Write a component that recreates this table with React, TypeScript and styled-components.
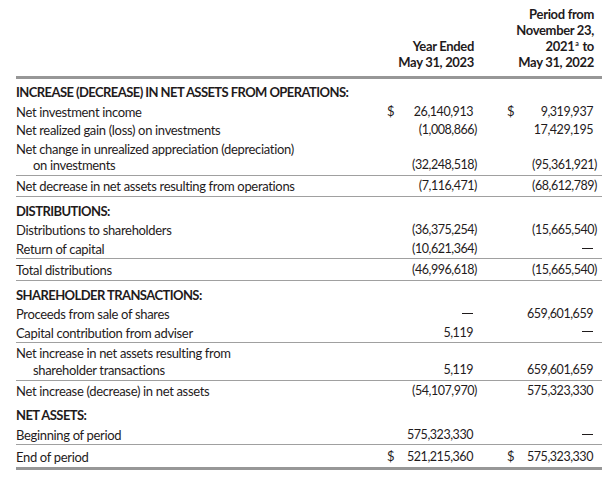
import React from 'react';
import styled, { createGlobalStyle, css } from 'styled-components';

const GlobalStyle = createGlobalStyle`
  html, body {
    margin: 0;
    padding: 0;
    background: #ffffff;
  }
  body {
    font-family: Lato, "Liberation Sans", sans-serif;
    color: #1f1b1c;
  }
`;

const Page = styled.div`
  width: 615px;
  box-sizing: border-box;
  padding: 6px 13px 0 16px;
  font-size: 13px;
  letter-spacing: -0.33px;
`;

const Head = styled.div`
  display: grid;
  grid-template-columns: 1fr 90px 90px;
  column-gap: 30px;
  align-items: end;
  padding: 0 5px 6px 0;
  border-bottom: 3px solid #979797;
  font-weight: 700;
  line-height: 16px;
`;

const HeadCell = styled.div`
  text-align: right;
  white-space: nowrap;
  padding-right: 3px;
`;

const Sup = styled.sup`
  font-size: 7px;
  line-height: 0;
  vertical-align: 5px;
  margin: 0 1px;
`;

const Section = styled.div<{ $first?: boolean }>`
  font-weight: 700;
  letter-spacing: -0.57px;
  line-height: 16.4px;
  padding: ${(p) => (p.$first ? '4.5px' : '6px')} 0 2px;
`;

type Rule = 'top' | 'both' | 'end';

const Row = styled.div<{ $rule?: Rule }>`
  display: grid;
  grid-template-columns: 1fr 90px 90px;
  column-gap: 30px;
  align-items: end;
  padding: 1px 5px 1px 0;
  line-height: 16.4px;
  ${(p) =>
    p.$rule &&
    css`
      border-top: 1px solid #a0a0a0;
      padding-top: 2.4px;
      padding-bottom: 1.7px;
    `}
  ${(p) =>
    p.$rule === 'both' &&
    css`
      border-bottom: 1px solid #a0a0a0;
    `}
  ${(p) =>
    p.$rule === 'end' &&
    css`
      border-bottom: 3px solid #979797;
    `}
`;

const Label = styled.div`
  white-space: nowrap;
`;

const Cont = styled.span`
  display: block;
  padding-left: 17px;
`;

const Amount = styled.div`
  display: flex;
  align-items: baseline;
  min-height: 16.4px;
  white-space: nowrap;
`;

const Dollar = styled.span`
  margin-right: auto;
`;

const Value = styled.span<{ $neg?: boolean }>`
  margin-left: auto;
  font-size: 12.5px;
  letter-spacing: -0.45px;
  padding-right: ${(p) => (p.$neg ? 0 : 4)}px;
`;

const Dash = styled.span`
  display: block;
  width: 11px;
  height: 1px;
  margin: 0 4px 8.5px auto;
  background: #1f1b1c;
  align-self: flex-end;
`;

type Line =
  | { kind: 'section'; label: string }
  | {
      kind: 'row';
      label: string;
      cont?: string;
      a: string;
      b: string;
      dollar?: boolean;
      rule?: Rule;
    };

const lines: Line[] = [
  { kind: 'section', label: 'INCREASE (DECREASE) IN NET ASSETS FROM OPERATIONS:' },
  { kind: 'row', label: 'Net investment income', a: '26,140,913', b: '9,319,937', dollar: true },
  { kind: 'row', label: 'Net realized gain (loss) on investments', a: '(1,008,866)', b: '17,429,195' },
  {
    kind: 'row',
    label: 'Net change in unrealized appreciation (depreciation)',
    cont: 'on investments',
    a: '(32,248,518)',
    b: '(95,361,921)',
  },
  {
    kind: 'row',
    label: 'Net decrease in net assets resulting from operations',
    a: '(7,116,471)',
    b: '(68,612,789)',
    rule: 'both',
  },
  { kind: 'section', label: 'DISTRIBUTIONS:' },
  { kind: 'row', label: 'Distributions to shareholders', a: '(36,375,254)', b: '(15,665,540)' },
  { kind: 'row', label: 'Return of capital', a: '(10,621,364)', b: '—' },
  { kind: 'row', label: 'Total distributions', a: '(46,996,618)', b: '(15,665,540)', rule: 'both' },
  { kind: 'section', label: 'SHAREHOLDER TRANSACTIONS:' },
  { kind: 'row', label: 'Proceeds from sale of shares', a: '—', b: '659,601,659' },
  { kind: 'row', label: 'Capital contribution from adviser', a: '5,119', b: '—' },
  {
    kind: 'row',
    label: 'Net increase in net assets resulting from',
    cont: 'shareholder transactions',
    a: '5,119',
    b: '659,601,659',
    rule: 'top',
  },
  {
    kind: 'row',
    label: 'Net increase (decrease) in net assets',
    a: '(54,107,970)',
    b: '575,323,330',
    rule: 'top',
  },
  { kind: 'section', label: 'NET ASSETS:' },
  { kind: 'row', label: 'Beginning of period', a: '575,323,330', b: '—' },
  { kind: 'row', label: 'End of period', a: '521,215,360', b: '575,323,330', dollar: true, rule: 'end' },
];

const Cell = ({ value, dollar }: { value: string; dollar?: boolean }) => (
  <Amount>
    {dollar && <Dollar>$</Dollar>}
    {value === '—' ? (
      <Dash aria-label="—" />
    ) : (
      <Value $neg={value.startsWith('(')}>{value}</Value>
    )}
  </Amount>
);

export default function App() {
  return (
    <>
      <GlobalStyle />
      <Page>
        <Head>
          <div />
          <HeadCell>
            Year Ended
            <br />
            May 31, 2023
          </HeadCell>
          <HeadCell>
            Period from
            <br />
            November 23,
            <br />
            2021<Sup>a</Sup> to
            <br />
            May 31, 2022
          </HeadCell>
        </Head>
        {lines.map((line, i) =>
          line.kind === 'section' ? (
            <Section key={i} $first={i === 0}>
              {line.label}
            </Section>
          ) : (
            <Row key={i} $rule={line.rule}>
              <Label>
                {line.label}
                {line.cont && <Cont>{line.cont}</Cont>}
              </Label>
              <Cell value={line.a} dollar={line.dollar} />
              <Cell value={line.b} dollar={line.dollar} />
            </Row>
          )
        )}
      </Page>
    </>
  );
}
